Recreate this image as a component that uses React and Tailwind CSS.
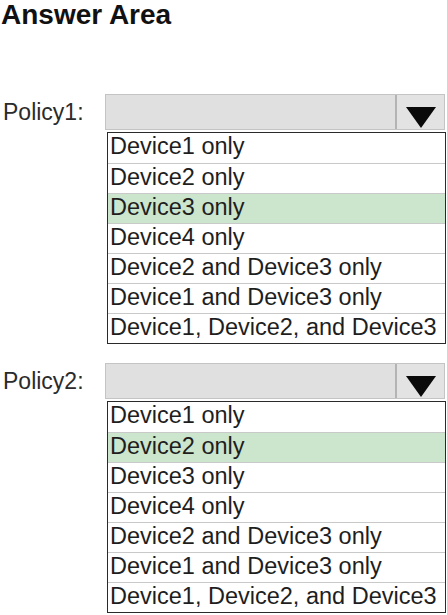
import React from 'react';

const OPTIONS = [
  'Device1 only',
  'Device2 only',
  'Device3 only',
  'Device4 only',
  'Device2 and Device3 only',
  'Device1 and Device3 only',
  'Device1, Device2, and Device3',
];

const PolicyDropdown = ({ label, selected, className }) => {
  return (
    <div className={`flex ${className}`}>
      {/* Label */}
      <div className="w-[105px] pl-[3px] pt-[3px] text-[23px] leading-[30px] text-[#2b2b2b]">
        {label}
      </div>

      <div className="w-[341px]">
        {/* Closed select box */}
        <div className="flex h-[36px] w-[340px] border border-[#c4c4c4] bg-[#e0e0e0]">
          <div className="flex-1" />
          <div className="flex w-[49px] justify-center border-l-2 border-[#b4b4b4] bg-[#e3e3e3] pt-[12px]">
            <svg width="30" height="21" viewBox="0 0 30 21">
              <path d="M0 0H30L15 21Z" fill="#0a0a0a" />
            </svg>
          </div>
        </div>

        {/* Open options list */}
        <div className="ml-[2px] mt-[2px] w-[339px] border border-[#2a2a2a] bg-white">
          {OPTIONS.map((opt, i) => (
            <div
              key={opt}
              className={`h-[30px] pl-[2px] text-[23.5px] leading-[26px] text-[#1e1e1e] ${
                i > 0 ? 'border-t border-[#c9c9c9]' : ''
              } ${opt === selected ? 'bg-[#cce5cd]' : ''}`}
            >
              {opt}
            </div>
          ))}
        </div>
      </div>
    </div>
  );
};

const App = () => {
  return (
    <div className="h-[615px] w-[447px] overflow-hidden bg-white font-['Liberation_Sans',Arial,sans-serif]">
      <h1 className="pl-[1px] pt-px text-[28px] font-bold leading-none text-[#111]">Answer Area</h1>

      <PolicyDropdown label="Policy1:" selected="Device3 only" className="mt-[65px]" />
      <PolicyDropdown label="Policy2:" selected="Device2 only" className="mt-[19px]" />
    </div>
  );
};

export default App;
